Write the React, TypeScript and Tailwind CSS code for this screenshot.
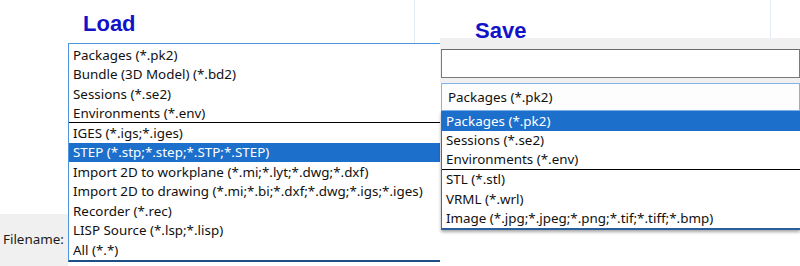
const loadItems = [
  { label: "Packages (*.pk2)" },
  { label: "Bundle (3D Model) (*.bd2)" },
  { label: "Sessions (*.se2)" },
  { label: "Environments (*.env)", sep: true },
  { label: "IGES (*.igs;*.iges)" },
  { label: "STEP (*.stp;*.step;*.STP;*.STEP)", selected: true },
  { label: "Import 2D to workplane (*.mi;*.lyt;*.dwg;*.dxf)" },
  { label: "Import 2D to drawing (*.mi;*.bi;*.dxf;*.dwg;*.igs;*.iges)" },
  { label: "Recorder (*.rec)" },
  { label: "LISP Source (*.lsp;*.lisp)" },
  { label: "All (*.*)" },
];

const saveItems = [
  { label: "Packages (*.pk2)", selected: true },
  { label: "Sessions (*.se2)" },
  { label: "Environments (*.env)", sep: true },
  { label: "STL (*.stl)" },
  { label: "VRML (*.wrl)" },
  { label: "Image (*.jpg;*.jpeg;*.png;*.tif;*.tiff;*.bmp)" },
];

function Row({ label, selected, sep }: { label: string; selected?: boolean; sep?: boolean }) {
  return (
    <div
      className={`h-[19.5px] pl-[4px] flex items-center whitespace-nowrap ${
        selected ? "bg-[#1c6fcb] text-white" : "text-[#111]"
      } ${sep ? "border-b border-black" : ""}`}
    >
      <span className="pt-[1px]">{label}</span>
    </div>
  );
}

export default function App() {
  return (
    <div className="w-[800px] h-[266px] overflow-hidden bg-white flex font-['Noto_Sans',sans-serif] text-[13.4px] leading-none">
      {/* Load side */}
      <div className="w-[440px] shrink-0 flex">
        <div className="w-[68px] shrink-0 flex flex-col">
          <div className="flex-1" />
          <div className="h-[52px] bg-[#f0f0f0] flex items-center pl-[3px] text-[#1a1a1a]">
            Filename:
          </div>
        </div>
        <div className="flex-1 flex flex-col">
          <div className="h-[43px] w-[347px] border-r border-[#e4ebf2] pl-[15px] pt-[13px]">
            <span className="font-['Liberation_Sans',Arial,sans-serif] font-bold text-[22px] text-[#1212c8]">
              Load
            </span>
          </div>
          <div className="border-t border-l border-[#4f95dc] border-b-2 border-b-[#1d4f86] pt-[1px] bg-white">
            {loadItems.map((item) => (
              <Row key={item.label} {...item} />
            ))}
          </div>
        </div>
      </div>

      {/* Save side */}
      <div className="flex-1 flex flex-col">
        <div className="h-[38px] w-[331px] border-r border-[#e4ebf2] pl-[35px] pt-[20px]">
          <span className="font-['Liberation_Sans',Arial,sans-serif] font-bold text-[22px] text-[#1212c8]">
            Save
          </span>
        </div>
        <div className="bg-[#f0f0f0] pt-[11px] pb-[5px]">
          <div className="h-[29px] ml-[1px] border border-[#7a7a7a] border-t-[#6a6a6a] bg-white" />
        </div>
        <div className="ml-[1px] h-[28px] border border-[#7eb4ea] bg-[#fdfdfd] flex items-center pl-[6px] text-[#111]">
          <span className="pt-[1px]">Packages (*.pk2)</span>
        </div>
        <div className="ml-[1px] border-l border-[#3a6ea5] border-b-2 border-b-[#2a5f9e] bg-white shadow-[0_2px_3px_rgba(0,0,0,0.35)]">
          {saveItems.map((item) => (
            <Row key={item.label} {...item} />
          ))}
        </div>
      </div>
    </div>
  );
}
